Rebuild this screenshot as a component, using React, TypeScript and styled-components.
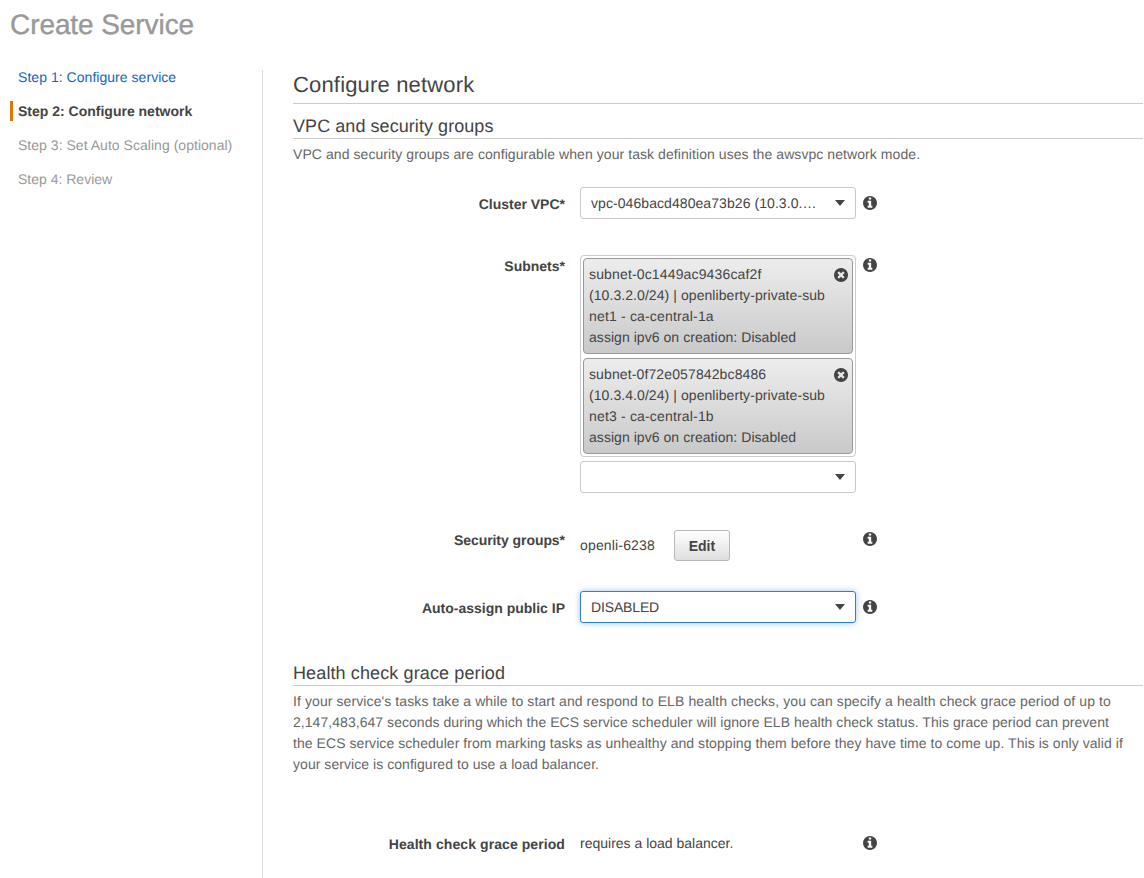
import React from "react";
import styled, { createGlobalStyle } from "styled-components";

const GlobalStyle = createGlobalStyle`
  * { box-sizing: border-box; }
  body {
    margin: 0;
    background: #fff;
    color: #444;
    font: 14px/21px "Helvetica Neue", "Liberation Sans", Arial, sans-serif;
    text-rendering: geometricPrecision;
    overflow: hidden;
  }
`;

const Page = styled.div`
  height: 878px;
  padding: 5px 1px 0 10px;
  display: flex;
  flex-direction: column;
  overflow: hidden;
`;

const Title = styled.h1`
  margin: 0 0 25px;
  height: 40px;
  font-size: 28px;
  line-height: 40px;
  font-weight: 400;
  color: #999;
  -webkit-text-stroke: 0.4px #999;
  letter-spacing: -0.08px;
`;

const Columns = styled.div`
  flex: 1;
  display: flex;
`;

const Steps = styled.nav`
  width: 253px;
  flex: none;
  border-right: 1px solid #ddd;
`;

const StepList = styled.div`
  display: flex;
  flex-direction: column;
  gap: 14px;
  margin-top: -3px;
`;

type StepState = "done" | "current" | "todo";

const stepColors: Record<StepState, string> = {
  done: "#1166bb",
  current: "#444",
  todo: "#999",
};

const Step = styled.div<{ $state: StepState; $spacing?: number }>`
  height: 20px;
  line-height: 20px;
  padding-left: 5px;
  border-left: 3px solid ${(p) => (p.$state === "current" ? "#e07700" : "transparent")};
  color: ${(p) => stepColors[p.$state]};
  font-weight: ${(p) => (p.$state === "current" ? 700 : 400)};
  letter-spacing: ${(p) => p.$spacing ?? 0}px;
  white-space: nowrap;
`;

const Main = styled.main`
  flex: 1;
  min-width: 0;
  padding-left: 30px;
`;

const PageHeading = styled.h2`
  margin: 0;
  height: 34px;
  border-bottom: 1px solid #ccc;
  font-size: 22px;
  line-height: 29px;
  font-weight: 400;
  letter-spacing: 0.17px;
`;

const SectionHeading = styled.h3<{ $gap: number; $spacing: number }>`
  margin: ${(p) => p.$gap}px 0 0;
  height: 25px;
  border-bottom: 1px solid #ccc;
  font-size: 18px;
  line-height: 25px;
  font-weight: 400;
  letter-spacing: ${(p) => p.$spacing}px;
`;

const Description = styled.p`
  margin: 5px 0 0;
  color: #666;
`;

const TextLine = styled.span<{ $spacing?: number }>`
  display: block;
  letter-spacing: ${(p) => p.$spacing ?? 0}px;
  white-space: nowrap;
`;

const Field = styled.div<{ $gap: number }>`
  display: grid;
  grid-template-columns: 272px 276px 14px;
  column-gap: 15px;
  margin-top: ${(p) => p.$gap}px;
  align-items: start;
`;

const Label = styled.label<{ $spacing?: number; $raised?: boolean }>`
  text-align: right;
  font-weight: 700;
  padding-top: ${(p) => (p.$raised ? 1 : 7)}px;
  letter-spacing: ${(p) => p.$spacing ?? 0}px;
  white-space: nowrap;
`;

const Hint = styled.span<{ $raised?: boolean }>`
  display: flex;
  margin-left: -8px;
  padding-top: ${(p) => (p.$raised ? 3 : 9)}px;
`;

const SelectBox = styled.div<{ $focused?: boolean }>`
  height: 32px;
  display: flex;
  align-items: center;
  justify-content: space-between;
  padding: 0 10px;
  border: 1px solid ${(p) => (p.$focused ? "#2a7fdc" : "#c8c8c8")};
  border-radius: 3px;
  background: #fff;
  box-shadow: ${(p) => (p.$focused ? "0 0 6px rgba(42, 127, 220, 0.45)" : "none")};
`;

const Caret = styled.span`
  border: 5.5px solid transparent;
  border-top: 6px solid #444;
  border-bottom: 0;
  margin-left: auto;
`;

const SubnetPicker = styled.div`
  display: flex;
  flex-direction: column;
  gap: 4px;
`;

const ChipList = styled.div`
  display: flex;
  flex-direction: column;
  gap: 4px;
  padding: 2px;
  border: 1px solid #ccc;
  border-radius: 4px;
`;

const Chip = styled.div`
  height: 96px;
  display: flex;
  justify-content: space-between;
  padding: 5px 4px 0 5px;
  border: 1px solid #999;
  border-radius: 4px;
  background: linear-gradient(#ededed, #c9c9c9);
`;

const ChipRemove = styled.span`
  display: flex;
  padding-top: 4px;
`;

const InlineControl = styled.div`
  display: flex;
  align-items: center;
  gap: 19px;
  padding-top: 1px;
`;

const Button = styled.button`
  width: 56px;
  height: 31px;
  padding: 1px 0 0;
  border: 1px solid #b8b8b8;
  border-radius: 3px;
  background: linear-gradient(#fff, #dedede);
  color: #444;
  font: inherit;
  font-weight: 700;
`;

const StaticText = styled.div`
  padding-top: 6px;
  white-space: nowrap;
`;

const disc =
  "M1536 896q0 209-103 385.5t-279.5 279.5-385.5 103-385.5-103-279.5-279.5-103-385.5 103-385.5 279.5-279.5 385.5-103 385.5 103 279.5 279.5 103 385.5z";

const InfoIcon = () => (
  <svg width="14" height="14" viewBox="0 128 1536 1536" fill="#444" fillRule="evenodd">
    <path
      d={
        "M1024 1376v-160q0-14-9-23t-23-9h-96v-512q0-14-9-23t-23-9h-320q-14 0-23 9t-9 23v160q0 14 9 23t23 9h96v320h-96q-14 0-23 9t-9 23v160q0 14 9 23t23 9h448q14 0 23-9t9-23zM896 480v-160q0-14-9-23t-23-9h-192q-14 0-23 9t-9 23v160q0 14 9 23t23 9h192q14 0 23-9t9-23z" +
        disc
      }
    />
  </svg>
);

const RemoveIcon = () => (
  <svg width="14" height="14" viewBox="0 128 1536 1536" fillRule="evenodd">
    <path
      fill="#444"
      d={
        "M1149 1122q0-26-19-45l-181-181 181-181q19-19 19-45 0-27-19-46l-90-90q-19-19-46-19-26 0-45 19l-181 181-181-181q-19-19-45-19-27 0-46 19l-90 90q-19 19-19 46 0 26 19 45l181 181-181 181q-19 19-19 45 0 27 19 46l90 90q19 19 46 19 26 0 45-19l181-181 181 181q19 19 45 19 27 0 46-19l90-90q19-19 19-46z" +
        disc
      }
    />
  </svg>
);

const Info = ({ raised }: { raised?: boolean }) => (
  <Hint $raised={raised}>
    <InfoIcon />
  </Hint>
);

type Line = { text: string; spacing: number };

const steps: (Line & { state: StepState })[] = [
  { text: "Step 1: Configure service", state: "done", spacing: 0.04 },
  { text: "Step 2: Configure network", state: "current", spacing: 0 },
  { text: "Step 3: Set Auto Scaling (optional)", state: "todo", spacing: 0.03 },
  { text: "Step 4: Review", state: "todo", spacing: 0 },
];

const subnets: Line[][] = [
  [
    { text: "subnet-0c1449ac9436caf2f", spacing: 0.15 },
    { text: "(10.3.2.0/24) | openliberty-private-sub", spacing: 0.07 },
    { text: "net1 - ca-central-1a", spacing: 0.17 },
    { text: "assign ipv6 on creation: Disabled", spacing: 0.05 },
  ],
  [
    { text: "subnet-0f72e057842bc8486", spacing: 0.12 },
    { text: "(10.3.4.0/24) | openliberty-private-sub", spacing: 0.07 },
    { text: "net3 - ca-central-1b", spacing: 0.17 },
    { text: "assign ipv6 on creation: Disabled", spacing: 0.05 },
  ],
];

const graceText: Line[] = [
  {
    text: "If your service's tasks take a while to start and respond to ELB health checks, you can specify a health check grace period of up to",
    spacing: 0.092,
  },
  {
    text: "2,147,483,647 seconds during which the ECS service scheduler will ignore ELB health check status. This grace period can prevent",
    spacing: 0.048,
  },
  {
    text: "the ECS service scheduler from marking tasks as unhealthy and stopping them before they have time to come up. This is only valid if",
    spacing: 0.058,
  },
  { text: "your service is configured to use a load balancer.", spacing: 0.05 },
];

const Lines = ({ lines }: { lines: Line[] }) => (
  <>
    {lines.map((line) => (
      <TextLine key={line.text} $spacing={line.spacing}>
        {line.text}
      </TextLine>
    ))}
  </>
);

export default function App() {
  return (
    <>
      <GlobalStyle />
      <Page>
        <Title>Create Service</Title>
        <Columns>
          <Steps>
            <StepList>
              {steps.map((s) => (
                <Step key={s.text} $state={s.state} $spacing={s.spacing}>
                  {s.text}
                </Step>
              ))}
            </StepList>
          </Steps>
          <Main>
            <PageHeading>Configure network</PageHeading>
            <SectionHeading $gap={10} $spacing={0.06}>
              VPC and security groups
            </SectionHeading>
            <Description>
              <TextLine $spacing={0.072}>
                VPC and security groups are configurable when your task definition uses the awsvpc network mode.
              </TextLine>
            </Description>

            <Field $gap={22}>
              <Label>Cluster VPC*</Label>
              <SelectBox>
                <TextLine $spacing={0.07}>vpc-046bacd480ea73b26 (10.3.0.…</TextLine>
                <Caret />
              </SelectBox>
              <Info />
            </Field>

            <Field $gap={36}>
              <Label $raised>Subnets*</Label>
              <SubnetPicker>
                <ChipList>
                  {subnets.map((lines) => (
                    <Chip key={lines[0].text}>
                      <div>
                        <Lines lines={lines} />
                      </div>
                      <ChipRemove>
                        <RemoveIcon />
                      </ChipRemove>
                    </Chip>
                  ))}
                </ChipList>
                <SelectBox>
                  <Caret />
                </SelectBox>
              </SubnetPicker>
              <Info raised />
            </Field>

            <Field $gap={36}>
              <Label $raised $spacing={-0.06}>
                Security groups*
              </Label>
              <InlineControl>
                <TextLine $spacing={0.16}>openli-6238</TextLine>
                <Button>Edit</Button>
              </InlineControl>
              <Info raised />
            </Field>

            <Field $gap={30}>
              <Label>Auto-assign public IP</Label>
              <SelectBox $focused>
                <TextLine $spacing={-0.15}>DISABLED</TextLine>
                <Caret />
              </SelectBox>
              <Info />
            </Field>

            <SectionHeading $gap={38} $spacing={0.12}>
              Health check grace period
            </SectionHeading>
            <Description as="div">
              <Lines lines={graceText} />
            </Description>

            <Field $gap={52}>
              <Label $spacing={0.08}>Health check grace period</Label>
              <StaticText>requires a load balancer.</StaticText>
              <Info />
            </Field>
          </Main>
        </Columns>
      </Page>
    </>
  );
}
